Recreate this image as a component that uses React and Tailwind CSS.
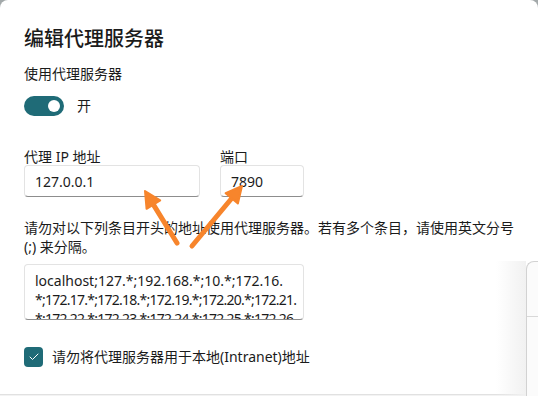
import { Check } from "lucide-react";

const font = {
  fontFamily: '"Segoe UI", "Noto Sans", "Noto Sans CJK SC", sans-serif',
};

function Arrow({ x1, y1, x2, y2 }) {
  // shaft ends short of the tip, head is a filled triangle
  const dx = x2 - x1;
  const dy = y2 - y1;
  const len = Math.hypot(dx, dy);
  const ux = dx / len;
  const uy = dy / len;
  const hl = 16;
  const hw = 8;
  const bx = x2 - ux * hl;
  const by = y2 - uy * hl;
  const pts = `${x2},${y2} ${bx - uy * hw},${by + ux * hw} ${bx + uy * hw},${by - ux * hw}`;
  return (
    <g>
      <line x1={x1} y1={y1} x2={bx + ux * 2} y2={by + uy * 2} stroke="#f7852c" strokeWidth="5" strokeLinecap="round" />
      <polygon points={pts} fill="#f7852c" stroke="#f7852c" strokeWidth="2" strokeLinejoin="round" />
    </g>
  );
}

export default function App() {
  return (
    <div className="w-[538px] h-[396px] bg-[#a3a9aa] overflow-hidden" style={font}>
      <div className="relative w-full h-full bg-white rounded-t-[8px] flex flex-col text-[#1b1b1b]">
        <div className="flex-1 px-6 pt-[25px]">
          <h1 className="text-[20px] leading-[28px] font-medium">编辑代理服务器</h1>

          <div className="mt-[11px] text-[14px] leading-[20px]">使用代理服务器</div>

          <div className="mt-[12px] flex items-center gap-[13px] h-5">
            <div className="w-10 h-5 rounded-full bg-[#1f6b77] flex items-center justify-end pr-[4px]">
              <div className="w-3 h-3 rounded-full bg-white" />
            </div>
            <span className="text-[14px] leading-[20px]">开</span>
          </div>

          <div className="mt-[31px] flex gap-[20px]">
            <div className="flex flex-col">
              <div className="text-[14px] leading-[20px]">代理 IP 地址</div>
              <div className="mt-[-2px] w-[176px] h-[32px] rounded-[4px] border border-[#e3e3e3] border-b-[#8d8d8d] px-[10px] flex items-center text-[14px]">
                127.0.0.1
              </div>
            </div>
            <div className="flex flex-col">
              <div className="text-[14px] leading-[20px]">端口</div>
              <div className="mt-[-2px] w-[84px] h-[32px] rounded-[4px] border border-[#e3e3e3] border-b-[#8d8d8d] px-[10px] flex items-center text-[14px]">
                7890
              </div>
            </div>
          </div>

          <div className="mt-[21px] w-[494px] text-[14px] leading-[19px]">
            请勿对以下列条目开头的地址使用代理服务器。若有多个条目，请使用英文分号 (;) 来分隔。
          </div>

          <div className="mt-[8px] w-[280px] h-[56px] rounded-[4px] border border-[#e3e3e3] border-b-[#8d8d8d] pl-[10px] pt-[6px] overflow-hidden text-[14px] leading-[19px] whitespace-nowrap">
            <div>localhost;127.*;192.168.*;10.*;172.16.</div>
            <div className="tracking-[-0.75px]">*;172.17.*;172.18.*;172.19.*;172.20.*;172.21.</div>
            <div className="tracking-[-0.75px]">*;172.22.*;172.23.*;172.24.*;172.25.*;172.26.</div>
          </div>

          <div className="mt-[27px] flex items-center gap-[9px]">
            <div className="w-[19px] h-[20px] rounded-[4px] bg-[#1f6b77] flex items-center justify-center">
              <Check size={12} color="white" strokeWidth={2} />
            </div>
            <span className="text-[14px] leading-[20px]">请勿将代理服务器用于本地(Intranet)地址</span>
          </div>
        </div>

        <div className="h-[2px] bg-[#f3f3f3] border-t border-[#e1e1e1]" />

        {/* window peeking in from the right */}
        <div className="absolute left-[496px] top-[261px] w-[30px] h-[135px] bg-gradient-to-r from-transparent to-[#f1f1f1]" />
        <div className="absolute left-[526px] top-[261px] w-[20px] h-[135px] bg-[#fbfbfb] rounded-tl-[8px] border-l border-t border-[#d2d2d2]">
          <div className="mt-[54px] border-t border-[#d8d8d8]" />
        </div>

        <svg className="absolute inset-0 pointer-events-none" width="538" height="396">
          <Arrow x1={177} y1={243} x2={145} y2={191} />
          <Arrow x1={192} y1={246} x2={242} y2={186} />
        </svg>
      </div>
    </div>
  );
}
